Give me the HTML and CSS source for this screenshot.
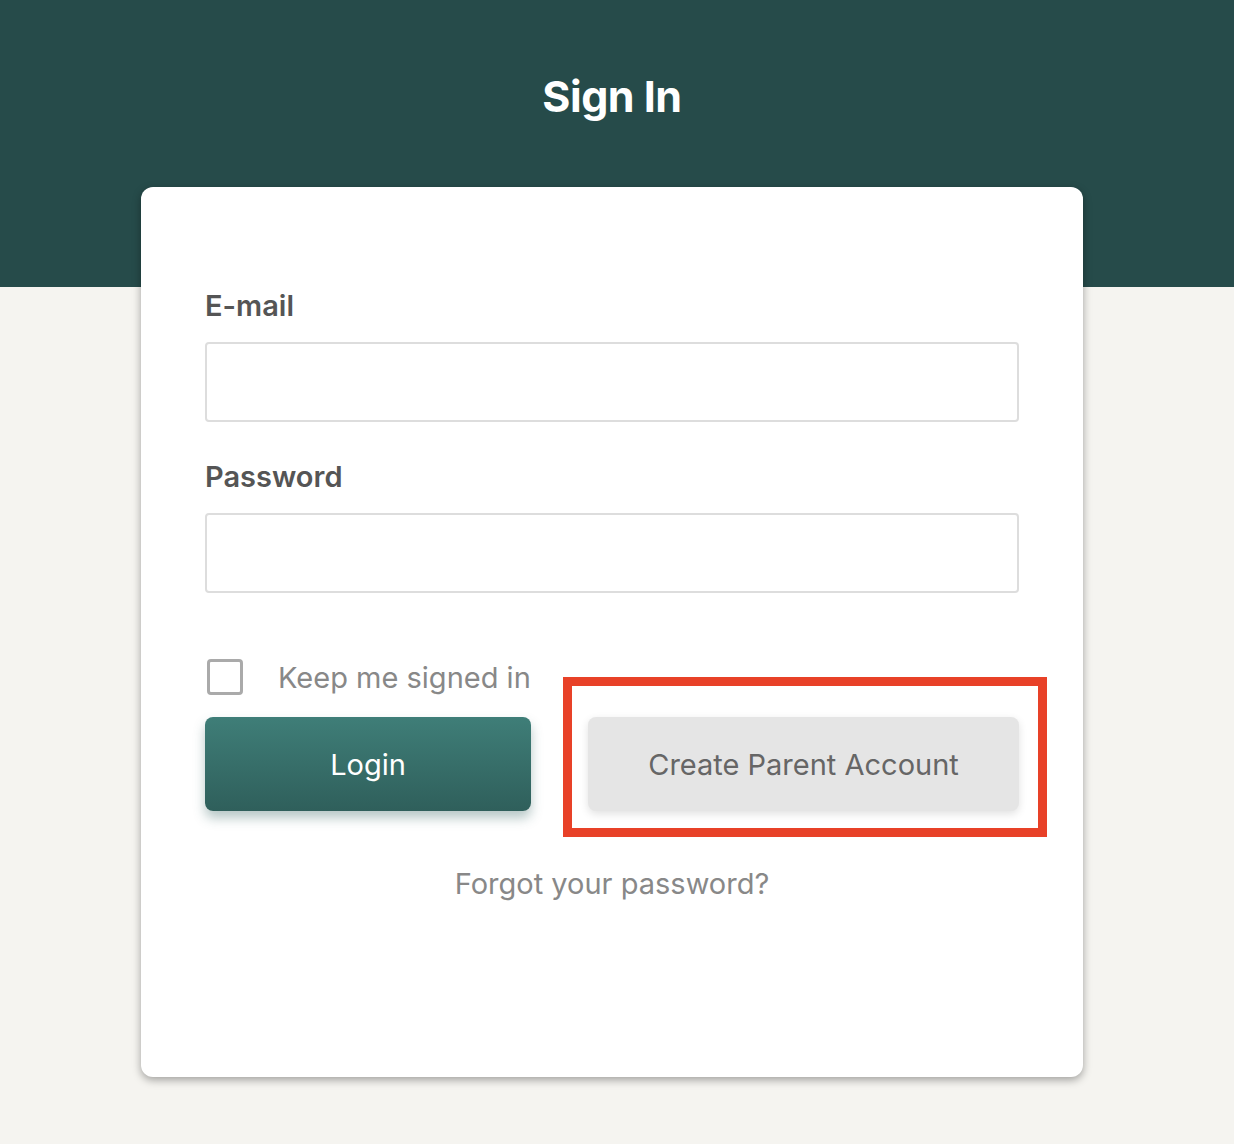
FILE: index.html
```html
<!DOCTYPE html>
<html lang="en">
<head>
  <meta charset="UTF-8">
  <meta name="viewport" content="width=device-width, initial-scale=1.0">
  <title>Sign In</title>
  <link rel="stylesheet" href="styles.css">
</head>
<body>

  <header class="topBar">
    <h1>Sign In</h1>
  </header>

  <div class="card">
    <label class="fieldLabel" for="email">E-mail</label>
    <input class="textInput" type="text" id="email">

    <label class="fieldLabel" for="password">Password</label>
    <input class="textInput" type="password" id="password">

    <div class="actions">
      <div class="leftCol">
        <label class="keepSigned">
          <span class="checkBox"></span>
          <span>Keep me signed in</span>
        </label>
        <button class="loginButton">Login</button>
      </div>
      <div class="rightCol">
        <button class="createButton">Create Parent Account</button>
        <div class="highlight"></div>
      </div>
    </div>

    <a class="forgotLink" href="#">Forgot your password?</a>
  </div>

</body>
</html>
```

FILE: styles.css
```css
body {
  font-family: 'Inter', 'Noto Sans', sans-serif;
  margin: 0;
  padding: 0;
  background: #f5f4f0;
  height: 1144px;
  overflow: hidden;
}

.topBar {
  background: #264b4a;
  height: 287px;
  padding-right: 10px;
  text-align: center;
}

.topBar h1 {
  margin: 0;
  padding-top: 70px;
  color: #fff;
  font-size: 43px;
  font-weight: 700;
  line-height: 52px;
  letter-spacing: -0.5px;
}

.card {
  width: 942px;
  height: 890px;
  box-sizing: border-box;
  margin: -100px 0 0 141px;
  padding: 101px 64px 0;
  background: #fff;
  border-radius: 12px;
  box-shadow: 0 3px 8px rgba(0, 0, 0, 0.35);
  display: flex;
  flex-direction: column;
}

.fieldLabel {
  display: block;
  font-size: 29px;
  font-weight: 600;
  color: #555;
  line-height: 36px;
  margin-bottom: 18px;
}

.textInput {
  width: 100%;
  height: 80px;
  box-sizing: border-box;
  border: 2px solid #ddd;
  border-radius: 4px;
  margin-bottom: 37px;
  font-size: 24px;
  outline: none;
}

.actions {
  display: flex;
  gap: 57px;
  margin-top: 27px;
}

.leftCol {
  width: 326px;
  display: flex;
  flex-direction: column;
}

.keepSigned {
  display: flex;
  align-items: center;
  gap: 35px;
  height: 40px;
  margin-bottom: 20px;
  padding-left: 2px;
  font-size: 29px;
  color: #888;
}

.checkBox {
  width: 36px;
  height: 36px;
  box-sizing: border-box;
  border: 3px solid #aaa;
  border-radius: 4px;
}

.loginButton {
  height: 94px;
  border: none;
  border-radius: 8px;
  background: linear-gradient(180deg, #3f7e78, #2f5f5b);
  color: #fff;
  font-family: inherit;
  font-size: 29px;
  box-shadow: 0 7px 12px rgba(47, 95, 91, 0.35);
}

.rightCol {
  position: relative;
  width: 431px;
  padding-top: 60px;
}

.createButton {
  width: 100%;
  height: 94px;
  border: none;
  border-radius: 8px;
  background: #e5e5e5;
  color: #666;
  font-family: inherit;
  font-size: 29px;
  box-shadow: 0 3px 8px rgba(0, 0, 0, 0.12);
}

.highlight {
  position: absolute;
  left: -25px;
  right: -28px;
  top: 20px;
  bottom: -26px;
  border: 9px solid #e84128;
}

.forgotLink {
  align-self: center;
  margin-top: 55px;
  font-size: 29px;
  color: #888;
  text-decoration: none;
}
```
